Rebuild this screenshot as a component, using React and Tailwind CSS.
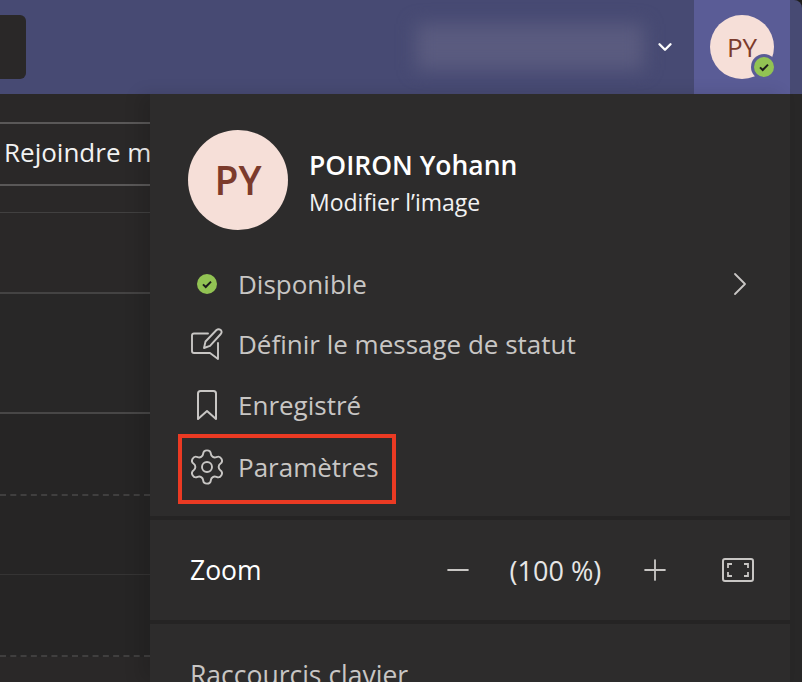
import React from "react";
import { Settings, ChevronRight, ChevronDown, Minus, Plus } from "lucide-react";

function StatusDot({ className }) {
  return (
    <svg viewBox="0 0 20 20" className={className}>
      <circle cx="10" cy="10" r="10" fill="#92c353" />
      <path d="M6 10.4 L8.7 13 L14 7.6" fill="none" stroke="#1c1c1c" strokeWidth="2" />
    </svg>
  );
}

function MessageEdit() {
  return (
    <svg viewBox="0 0 32 32" className="h-[32px] w-[32px]" fill="none" stroke="#c8c6c4" strokeWidth="1.9" strokeLinejoin="round" strokeLinecap="round">
      <path d="M17 5.5 H3 Q1 5.5 1 7.5 V23 Q1 25 3 25 H19 L27 31 V15" />
      <path d="M13 20 L14.5 13.5 L25.5 2 Q27.5 0.4 29.8 2 Q31.4 4 29.8 6 L19 17.8 Z" />
    </svg>
  );
}

function BookmarkIcon() {
  return (
    <svg viewBox="0 0 20 30" className="h-[30px] w-[20px]" fill="none" stroke="#c8c6c4" strokeWidth="2" strokeLinejoin="round">
      <path d="M1 3.5 Q1 1 3.5 1 H16.5 Q19 1 19 3.5 V29 L10 21 L1 29 Z" />
    </svg>
  );
}

function FitIcon() {
  return (
    <svg viewBox="0 0 32 24" className="h-[24px] w-[32px]" fill="none" stroke="#c8c6c4" strokeWidth="2">
      <rect x="1" y="1" width="30" height="22" rx="2" />
      <path d="M6 10 V6 H10 M22 6 H26 V10 M26 14 V18 H22 M10 18 H6 V14" strokeWidth="1.8" />
    </svg>
  );
}

function MenuRow({ icon, label, h, children }) {
  return (
    <div className={`flex items-center ${h}`}>
      <div className="box-border flex w-[89px] shrink-0 items-center justify-center pl-[25px]">{icon}</div>
      <span className="-ml-[1px] text-[26px] leading-none text-[#c8c6c4]">{label}</span>
      {children}
    </div>
  );
}

export default function App() {
  return (
    <div className="h-[682px] w-[802px] overflow-hidden bg-[#1f1e1e] font-['Open_Sans','Noto_Sans',sans-serif]">
      <header className="flex h-[94px] items-center rounded-tr-lg bg-[#474a73]">
        <div className="h-[64px] w-[26px] rounded-r-md bg-[#2a2828]" />
        <div className="ml-[390px] h-[46px] w-[228px] bg-[#5a5b7f] blur-[9px]" />
        <ChevronDown className="ml-[10px] h-[22px] w-[22px] text-white" strokeWidth={2.6} />
        <div className="ml-[18px] flex h-full w-[96px] items-center justify-center bg-[#5a5c96]">
          <div className="relative flex h-[64px] w-[64px] items-center justify-center rounded-full bg-[#f6dfd8] text-[26px] font-medium text-[#7c3b2c]">
            PY
            <div className="absolute -bottom-[1px] -right-[3px] flex h-[26px] w-[26px] items-center justify-center rounded-full bg-[#5a5c96]">
              <StatusDot className="h-[20px] w-[20px]" />
            </div>
          </div>
        </div>
      </header>
      <div className="flex h-[588px]">
        <aside className="w-[150px] shrink-0 bg-[#2a2828]">
          <div className="h-[30px] border-b-2 border-[#5a5858]" />
          <div className="h-[62px] overflow-hidden whitespace-nowrap border-b-2 border-[#5a5858] pl-[4px] pt-[10px] text-[26px] font-medium leading-[36px] text-[#f2f2f2]">
            Rejoindre m
          </div>
          <div className="h-[27px] border-b border-[#414040]" />
          <div className="h-[81px] border-b-2 border-[#444343]" />
          <div className="h-[120px] border-b-2 border-[#484747] bg-[#282727]" />
          <div className="h-[82px] border-b-2 border-dashed border-[#403f3f] bg-[#262525]" />
          <div className="h-[79px] border-b border-[#353434] bg-[#262525]" />
          <div className="h-[82px] border-b-2 border-dashed border-[#403f3f] bg-[#262525]" />
        </aside>
        <main className="z-10 w-[640px] shrink-0 bg-[#252424] shadow-[-10px_0_16px_rgba(0,0,0,0.12)]">
          <section className="h-[422px] bg-[#2d2c2c] pt-[36px]">
            <div className="flex h-[100px] items-center pl-[38px]">
              <div className="flex h-[100px] w-[100px] items-center justify-center rounded-full bg-[#f6dfd8] text-[39px] font-semibold text-[#7c3b2c]">
                PY
              </div>
              <div className="ml-[21px] pt-[7px]">
                <div className="text-[26.5px] font-semibold leading-[37px] text-white">POIRON Yohann</div>
                <div className="text-[23px] leading-[37px] text-[#f2f2f2]">Modifier l’image</div>
              </div>
            </div>
            <div className="mt-[23px]">
              <MenuRow icon={<StatusDot className="h-[20px] w-[20px]" />} label="Disponible" h="h-[61px]">
                <ChevronRight className="ml-auto mr-[30px] h-[40px] w-[40px] text-[#c8c6c4]" strokeWidth={1.1} />
              </MenuRow>
              <MenuRow icon={<MessageEdit />} label="Définir le message de statut" h="h-[60px]" />
              <MenuRow icon={<BookmarkIcon />} label="Enregistré" h="h-[62px]" />
              <div className="relative">
                <MenuRow icon={<Settings className="h-[40px] w-[40px] text-[#c8c6c4]" strokeWidth={1.15} />} label="Paramètres" h="h-[62px]" />
                <div className="absolute -top-[2px] left-[28px] h-[70px] w-[218px] border-4 border-[#ea3a23]" />
              </div>
            </div>
          </section>
          <section className="mt-[4px] flex h-[100px] items-center bg-[#2d2c2c] pl-[40px] text-white">
            <span className="text-[26.5px] leading-none">Zoom</span>
            <Minus className="ml-[179px] h-[34px] w-[34px] text-[#c8c6c4]" strokeWidth={1.3} />
            <span className="ml-[35px] text-[27px] leading-none text-[#e6e6e6]">(100 %)</span>
            <Plus className="ml-[37px] h-[34px] w-[34px] text-[#c8c6c4]" strokeWidth={1.3} />
            <div className="ml-[50px]"><FitIcon /></div>
          </section>
          <section className="mt-[4px] h-[58px] bg-[#2d2c2c] pl-[40px] pt-[33px] text-[26.5px] leading-[36px] text-[#c8c6c4]">
            Raccourcis clavier
          </section>
        </main>
        <div className="flex-1 bg-[#282727]" />
      </div>
    </div>
  );
}
